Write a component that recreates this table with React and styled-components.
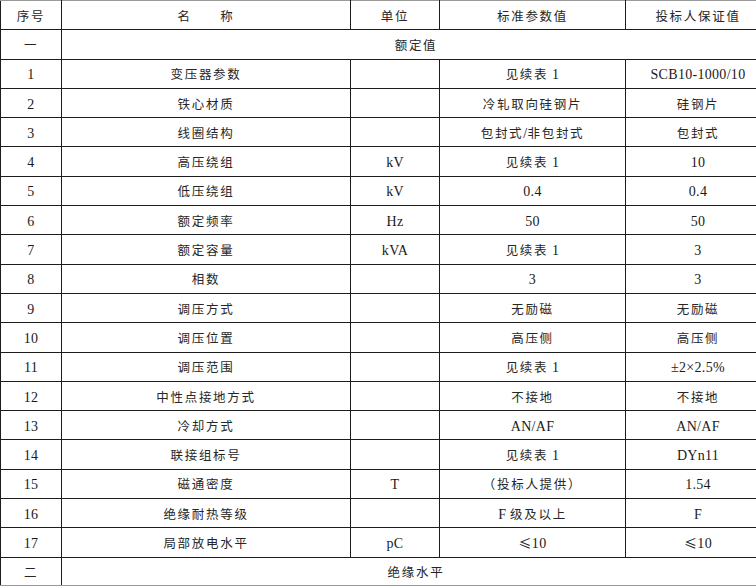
import React from "react";
import styled, { createGlobalStyle } from "styled-components";

const GlobalStyle = createGlobalStyle`
  html, body {
    margin: 0;
    padding: 0;
    background: #ffffff;
    overflow: hidden;
  }
`;

const rows = [
  ["1", "变压器参数", "", "见续表 1", "SCB10-1000/10"],
  ["2", "铁心材质", "", "冷轧取向硅钢片", "硅钢片"],
  ["3", "线圈结构", "", "包封式/非包封式", "包封式"],
  ["4", "高压绕组", "kV", "见续表 1", "10"],
  ["5", "低压绕组", "kV", "0.4", "0.4"],
  ["6", "额定频率", "Hz", "50", "50"],
  ["7", "额定容量", "kVA", "见续表 1", "3"],
  ["8", "相数", "", "3", "3"],
  ["9", "调压方式", "", "无励磁", "无励磁"],
  ["10", "调压位置", "", "高压侧", "高压侧"],
  ["11", "调压范围", "", "见续表 1", "±2×2.5%"],
  ["12", "中性点接地方式", "", "不接地", "不接地"],
  ["13", "冷却方式", "", "AN/AF", "AN/AF"],
  ["14", "联接组标号", "", "见续表 1", "DYn11"],
  ["15", "磁通密度", "T", "（投标人提供）", "1.54"],
  ["16", "绝缘耐热等级", "", "F 级及以上", "F"],
  ["17", "局部放电水平", "pC", "≤10", "≤10"],
];

const Sheet = styled.table`
  border-collapse: collapse;
  table-layout: fixed;
  width: 770px;
  font-family: "Liberation Serif", "Noto Sans CJK SC", serif;
  font-size: 14px;
  color: #1a1a1a;
`;

const Row = styled.tr`
  height: ${(p) => p.$h || 29.3}px;
`;

const Cell = styled.td`
  border: 1px solid #1c1c1c;
  border-top-color: ${(p) => (p.$first ? "#9a9a9a" : "#1c1c1c")};
  border-bottom-color: ${(p) => (p.$last ? "#9a9a9a" : "#1c1c1c")};
  padding: 3px 0 0;
  text-align: center;
  vertical-align: middle;
  white-space: nowrap;
  line-height: 1;
  letter-spacing: 0.3px;
`;

const Zh = styled.span`
  font-family: "Noto Sans CJK SC", sans-serif;
  font-size: 12.5px;
  letter-spacing: 1.7px;
  color: #262626;
`;

const Le = styled.span`
  font-family: "Noto Sans CJK SC", sans-serif;
  font-size: 13px;
`;

// split a string into CJK runs and latin runs
const Txt = ({ s }) => {
  const parts = s.match(/[\u3000-\u9fff\uff00-\uffef]+|[^\u3000-\u9fff\uff00-\uffef]+/g) || [];
  return parts.map((p, i) =>
    /[\u3000-\u9fff\uff00-\uffef]/.test(p) ? (
      <Zh key={i}>{p}</Zh>
    ) : p === "≤10" ? (
      <span key={i}>
        <Le>≤</Le>10
      </span>
    ) : (
      <span key={i}>{p}</span>
    )
  );
};

const App = () => {
  return (
    <>
      <GlobalStyle />
      <Sheet>
        <colgroup>
          <col style={{ width: 61 }} />
          <col style={{ width: 289 }} />
          <col style={{ width: 89 }} />
          <col style={{ width: 186 }} />
          <col style={{ width: 145 }} />
        </colgroup>
        <tbody>
          <Row>
            {["序号", "名　　称", "单位", "标准参数值", "投标人保证值"].map((h) => (
              <Cell key={h} $first>
                <Txt s={h} />
              </Cell>
            ))}
          </Row>
          <Row>
            <Cell>
              <Txt s="一" />
            </Cell>
            <Cell colSpan={4}>
              <Txt s="额定值" />
            </Cell>
          </Row>
          {rows.map((r) => (
            <Row key={r[0]}>
              {r.map((c, i) => (
                <Cell key={i}>
                  <Txt s={c} />
                </Cell>
              ))}
            </Row>
          ))}
          <Row $h={28}>
            <Cell $last>
              <Txt s="二" />
            </Cell>
            <Cell colSpan={4} $last>
              <Txt s="绝缘水平" />
            </Cell>
          </Row>
        </tbody>
      </Sheet>
    </>
  );
};

export default App;
